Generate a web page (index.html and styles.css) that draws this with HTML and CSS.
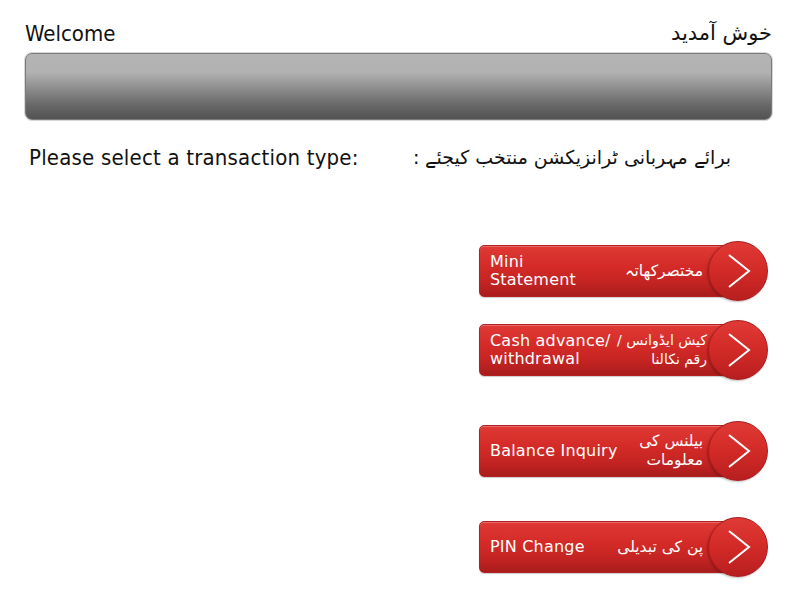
FILE: index.html
```html
<!DOCTYPE html>
<html>
<head>
<meta charset="utf-8">
<link rel="stylesheet" href="styles.css">
</head>
<body>
<div class="screen">
  <div class="header">
    <div class="en title">Welcome</div>
    <div class="ur title-ur" dir="rtl">خوش آمدید</div>
  </div>
  <div class="bar"></div>
  <div class="prompt">
    <div class="en prompt-en">Please select a transaction type:</div>
    <div class="ur prompt-ur" dir="rtl">برائے مہربانی ٹرانزیکشن منتخب کیجئے :</div>
  </div>
  <div class="menu">
    <div class="row r1">
      <div class="pill">
        <div class="lbl">Mini<br>Statement</div>
        <div class="lbl-ur" dir="rtl">مختصرکھاتہ</div>
      </div>
      <div class="go"><svg width="60" height="60" viewBox="0 0 60 60"><path d="M21 14 L41 30 L21 46" fill="none" stroke="#fff" stroke-width="2"/></svg></div>
    </div>
    <div class="row r2">
      <div class="pill">
        <div class="lbl">Cash advance/<br>withdrawal</div>
        <div class="lbl-ur two small" dir="rtl">کیش ایڈوانس /<br>رقم نکالنا</div>
      </div>
      <div class="go"><svg width="60" height="60" viewBox="0 0 60 60"><path d="M21 14 L41 30 L21 46" fill="none" stroke="#fff" stroke-width="2"/></svg></div>
    </div>
    <div class="row r3">
      <div class="pill">
        <div class="lbl">Balance Inquiry</div>
        <div class="lbl-ur two" dir="rtl">بیلنس کی<br>معلومات</div>
      </div>
      <div class="go"><svg width="60" height="60" viewBox="0 0 60 60"><path d="M21 14 L41 30 L21 46" fill="none" stroke="#fff" stroke-width="2"/></svg></div>
    </div>
    <div class="row r4">
      <div class="pill">
        <div class="lbl">PIN Change</div>
        <div class="lbl-ur" dir="rtl">پن کی تبدیلی</div>
      </div>
      <div class="go"><svg width="60" height="60" viewBox="0 0 60 60"><path d="M21 14 L41 30 L21 46" fill="none" stroke="#fff" stroke-width="2"/></svg></div>
    </div>
  </div>
</div>
</body>
</html>
```
FILE: styles.css
```css
html, body {
  margin: 0;
  padding: 0;
  background: #fff;
}
.screen {
  width: 800px;
  height: 600px;
  box-sizing: border-box;
  padding: 18px 28px 0 25px;
  display: flex;
  flex-direction: column;
}
.en {
  font-family: "DejaVu Sans Condensed", "Liberation Sans Narrow", "DejaVu Sans", sans-serif;
  font-stretch: condensed;
  color: #111;
}
.ur {
  font-family: "DejaVu Sans", sans-serif;
  color: #111;
}
.header {
  display: flex;
  justify-content: space-between;
  align-items: center;
  height: 30px;
}
.title {
  font-size: 22px;
}
.title-ur {
  font-size: 21px;
  margin-right: 0;
}
.bar {
  margin-top: 5px;
  height: 65px;
  border: 1px solid #7a7a7a;
  border-radius: 7px;
  background: linear-gradient(to bottom, #b4b4b4 0%, #b2b2b2 28%, #8a8a8a 55%, #666 80%, #535353 100%);
  box-shadow: 0 0 0 1px #d8d8d8;
}
.prompt {
  display: flex;
  align-items: center;
  margin-top: 22px;
  height: 30px;
}
.prompt-en {
  font-size: 22px;
  letter-spacing: 0.2px;
  margin-left: 4px;
  width: 384px;
}
.prompt-ur {
  font-size: 19px;
}
.menu {
  display: flex;
  flex-direction: column;
  align-items: flex-end;
  margin-top: 69px;
}
.row {
  display: flex;
  align-items: center;
  width: 289px;
  height: 60px;
  margin-right: 4px;
}
.r2 { margin-top: 19px; }
.r3 { margin-top: 41px; }
.r4 { margin-top: 36px; }
.pill {
  flex: 1;
  min-width: 0;
  height: 52px;
  margin-right: -34px;
  box-sizing: border-box;
  padding: 0 38px 0 10px;
  border-radius: 5px;
  background: linear-gradient(to bottom, #df3a35 0%, #d52b28 40%, #c22322 75%, #a81c1c 100%);
  border: 1px solid #b52020;
  box-shadow: inset 0 1px 0 rgba(255,255,255,0.25), 0 1px 1px rgba(0,0,0,0.2);
  display: flex;
  align-items: center;
  justify-content: space-between;
  color: #fff;
  white-space: nowrap;
}
.lbl {
  font-family: "DejaVu Sans", sans-serif;
  font-size: 16px;
  line-height: 18px;
  letter-spacing: 0.2px;
}
.lbl-ur {
  font-family: "DejaVu Sans", sans-serif;
  font-size: 15.5px;
  line-height: 20px;
  text-align: right;
}
.lbl-ur.two {
  line-height: 19px;
}
.lbl-ur.small {
  font-size: 14px;
  margin-right: -4px;
}
.go {
  position: relative;
  width: 60px;
  height: 60px;
  border-radius: 50%;
  box-sizing: border-box;
  background: linear-gradient(to bottom, #e03a36 0%, #d22a27 50%, #b81f1f 100%);
  border: 1px solid #a81b1b;
  box-shadow: -1px 1px 2px rgba(0,0,0,0.25);
  flex: none;
}
.go svg {
  display: block;
  margin: -1px;
}
```
